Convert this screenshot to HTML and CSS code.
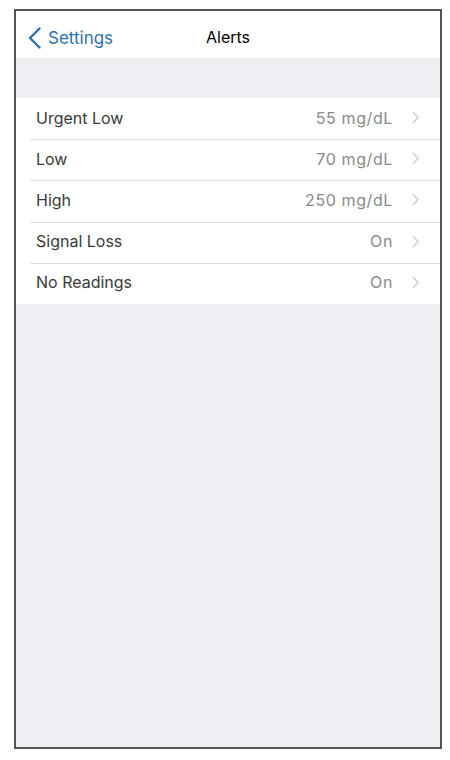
FILE: index.html
```html
<!DOCTYPE html>
<html lang="en">
<head>
  <meta charset="UTF-8">
  <meta name="viewport" content="width=device-width, initial-scale=1.0">
  <title>Alerts</title>
  <link rel="stylesheet" href="styles.css">
</head>
<body>

<div class="phone">
  <div class="nav-bar">
    <a class="back-btn" href="#">
      <svg class="back-icon" width="14" height="22" viewBox="0 0 14 22">
        <path d="M11.5 1.5 L2 11 L11.5 20.5" fill="none" stroke="#2c70ad" stroke-width="2.4" stroke-linecap="round" stroke-linejoin="round"/>
      </svg>
      <span>Settings</span>
    </a>
    <h1 class="nav-title">Alerts</h1>
    <div></div>
  </div>

  <div class="section-gap"></div>

  <ul class="settings-list">
    <li class="row">
      <span class="row-label">Urgent Low</span>
      <span class="row-value">55 mg/dL</span>
      <svg class="chevron" width="7" height="13" viewBox="0 0 7 13"><path d="M1 1 L6 6.5 L1 12" fill="none" stroke="#c8c8cd" stroke-width="1.2"/></svg>
    </li>
    <li class="row">
      <span class="row-label">Low</span>
      <span class="row-value">70 mg/dL</span>
      <svg class="chevron" width="7" height="13" viewBox="0 0 7 13"><path d="M1 1 L6 6.5 L1 12" fill="none" stroke="#c8c8cd" stroke-width="1.2"/></svg>
    </li>
    <li class="row">
      <span class="row-label">High</span>
      <span class="row-value">250 mg/dL</span>
      <svg class="chevron" width="7" height="13" viewBox="0 0 7 13"><path d="M1 1 L6 6.5 L1 12" fill="none" stroke="#c8c8cd" stroke-width="1.2"/></svg>
    </li>
    <li class="row">
      <span class="row-label">Signal Loss</span>
      <span class="row-value">On</span>
      <svg class="chevron" width="7" height="13" viewBox="0 0 7 13"><path d="M1 1 L6 6.5 L1 12" fill="none" stroke="#c8c8cd" stroke-width="1.2"/></svg>
    </li>
    <li class="row">
      <span class="row-label">No Readings</span>
      <span class="row-value">On</span>
      <svg class="chevron" width="7" height="13" viewBox="0 0 7 13"><path d="M1 1 L6 6.5 L1 12" fill="none" stroke="#c8c8cd" stroke-width="1.2"/></svg>
    </li>
  </ul>
</div>

</body>
</html>
```

FILE: styles.css
```css
body {
  font-family: Inter, 'Liberation Sans', Arial, sans-serif;
  background-color: #fff;
  margin: 0;
  padding: 0;
}
.phone {
  width: 428px;
  height: 740px;
  margin: 9px 0 0 14px;
  box-sizing: border-box;
  border: 2px solid #555557;
  background-color: #efeff3;
}
.nav-bar {
  height: 47px;
  background-color: #fff;
  display: grid;
  grid-template-columns: 1fr auto 1fr;
  align-items: center;
}
.back-btn {
  display: flex;
  align-items: center;
  gap: 6px;
  padding-left: 12px;
  padding-top: 6px;
  color: #2c70ad;
  font-size: 17px;
  text-decoration: none;
}
.nav-title {
  margin: 0;
  padding-top: 4px;
  font-size: 16px;
  font-weight: normal;
  color: #000;
}
.section-gap {
  height: 40px;
}
.settings-list {
  list-style: none;
  margin: 0;
  padding: 0;
  background-color: #fff;
}
.row {
  height: 41.2px;
  box-sizing: border-box;
  display: flex;
  align-items: center;
  padding: 0 21px 2px 20px;
  position: relative;
  font-size: 16px;
}
.row + .row::before {
  content: '';
  position: absolute;
  top: 0;
  left: 14px;
  right: 0;
  border-top: 1px solid #dcdcdf;
}
.row-label {
  flex: 1;
  color: #3a3a3a;
}
.row-value {
  color: #8a8a8a;
  letter-spacing: 0.6px;
  margin-right: 19px;
}
.chevron {
  display: block;
}
```
